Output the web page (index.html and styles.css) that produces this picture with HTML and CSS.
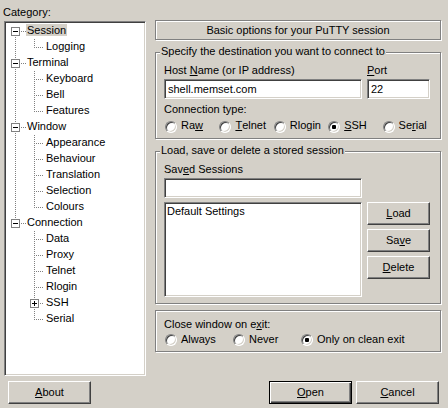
FILE: index.html
```html
<!DOCTYPE html>
<html lang="en">
<head>
<meta charset="utf-8">
<title>PuTTY Configuration</title>
<link rel="stylesheet" href="styles.css">
</head>
<body>
<div class="dialog">
  <div class="main">
    <div class="left">
      <div class="category-label">Category:</div>
      <div class="tree sunken">
        <svg class="tree-lines" width="138" height="351" viewBox="0 0 138 351">
          <g stroke="#808080" stroke-dasharray="1 1" fill="none" stroke-width="1">
            <path d="M9.5 8 V201"/>
            <path d="M15 8.5 H20 M15 40.5 H20 M15 104.5 H20 M15 200.5 H20"/>
            <path d="M28.5 16 V25 M28.5 48 V89 M28.5 112 V185 M28.5 208 V297"/>
            <path d="M30 24.5 H38 M30 56.5 H38 M30 72.5 H38 M30 88.5 H38 M30 120.5 H38 M30 136.5 H38 M30 152.5 H38 M30 168.5 H38 M30 184.5 H38 M30 216.5 H38 M30 232.5 H38 M30 248.5 H38 M30 264.5 H38 M34 280.5 H38 M30 296.5 H38"/>
          </g>
          <g stroke="#808080" fill="#fff" stroke-width="1">
            <rect x="5.5" y="4.5" width="8" height="8"/>
            <rect x="5.5" y="36.5" width="8" height="8"/>
            <rect x="5.5" y="100.5" width="8" height="8"/>
            <rect x="5.5" y="196.5" width="8" height="8"/>
            <rect x="24.5" y="276.5" width="8" height="8"/>
          </g>
          <g stroke="#000" fill="none" stroke-width="1">
            <path d="M7 8.5 H12 M7 40.5 H12 M7 104.5 H12 M7 200.5 H12"/>
            <path d="M26 280.5 H31 M28.5 278 V283"/>
          </g>
        </svg>
        <ul class="tree-list">
          <li class="l1"><span class="sel">Session</span></li>
          <li class="l2"><span>Logging</span></li>
          <li class="l1"><span>Terminal</span></li>
          <li class="l2"><span>Keyboard</span></li>
          <li class="l2"><span>Bell</span></li>
          <li class="l2"><span>Features</span></li>
          <li class="l1"><span>Window</span></li>
          <li class="l2"><span>Appearance</span></li>
          <li class="l2"><span>Behaviour</span></li>
          <li class="l2"><span>Translation</span></li>
          <li class="l2"><span>Selection</span></li>
          <li class="l2"><span>Colours</span></li>
          <li class="l1"><span>Connection</span></li>
          <li class="l2"><span>Data</span></li>
          <li class="l2"><span>Proxy</span></li>
          <li class="l2"><span>Telnet</span></li>
          <li class="l2"><span>Rlogin</span></li>
          <li class="l2"><span>SSH</span></li>
          <li class="l2"><span>Serial</span></li>
        </ul>
      </div>
    </div>

    <div class="right">
      <div class="header etched">Basic options for your PuTTY session</div>

      <div class="group etched g1">
        <span class="group-title">Specify the destination you want to connect to</span>
        <div class="host-grid">
          <div class="label">Host <u>N</u>ame (or IP address)</div>
          <div class="label"><u>P</u>ort</div>
          <div class="edit sunken">shell.memset.com</div>
          <div class="edit sunken">22</div>
        </div>
        <div class="label conn-label">Connection type:</div>
        <div class="radios five">
          <div class="opt"><span class="radio"></span>Ra<u>w</u></div>
          <div class="opt"><span class="radio"></span><u>T</u>elnet</div>
          <div class="opt"><span class="radio"></span>Rlogin</div>
          <div class="opt"><span class="radio on"></span><u>S</u>SH</div>
          <div class="opt"><span class="radio"></span>Se<u>r</u>ial</div>
        </div>
      </div>

      <div class="group etched g2">
        <span class="group-title">Load, save or delete a stored session</span>
        <div class="sess-grid">
          <div class="label">Sav<u>e</u>d Sessions</div>
          <div class="edit sunken saved-edit"></div>
          <div class="listbox sunken"><div class="list-item">Default Settings</div></div>
          <div class="side-buttons">
            <div class="btn small"><u>L</u>oad</div>
            <div class="btn small">Sa<u>v</u>e</div>
            <div class="btn small"><u>D</u>elete</div>
          </div>
        </div>
      </div>

      <div class="group etched g3">
        <div class="label">Close window on e<u>x</u>it:</div>
        <div class="radios four">
          <div class="opt"><span class="radio"></span>Always</div>
          <div class="opt"><span class="radio"></span>Never</div>
          <div class="opt wide"><span class="radio on"></span>Only on clean exit</div>
        </div>
      </div>
    </div>
  </div>

  <div class="footer">
    <div class="btn wide-btn"><u>A</u>bout</div>
    <div class="spacer"></div>
    <div class="btn wide-btn default"><u>O</u>pen</div>
    <div class="btn wide-btn"><u>C</u>ancel</div>
  </div>
</div>
</body>
</html>
```

FILE: styles.css
```css
* { box-sizing: border-box; }

html, body {
  margin: 0;
  padding: 0;
}

body {
  width: 448px;
  height: 408px;
  overflow: hidden;
  background: #d4d0c8;
  color: #000;
  font-family: "Liberation Sans", Arial, sans-serif;
  font-size: 11px;
}

u { text-decoration: underline; text-underline-offset: 1px; }

.dialog {
  display: flex;
  flex-direction: column;
  width: 448px;
  height: 408px;
}

.main {
  display: flex;
  height: 378px;
}

/* ---------- shared 3D styles ---------- */
.sunken {
  background: #fff;
  border: 1px solid;
  border-color: #808080 #fff #fff #808080;
  box-shadow: inset 1px 1px 0 #404040, inset -1px -1px 0 #d4d0c8;
}

.etched {
  border: 1px solid #808080;
  box-shadow: inset 1px 1px 0 #fff, 1px 1px 0 #fff;
}

.label {
  line-height: 13px;
  height: 13px;
  white-space: nowrap;
}

/* ---------- left: tree ---------- */
.left {
  width: 148px;
  padding-top: 6px;
  display: flex;
  flex-direction: column;
}

.category-label {
  line-height: 13px;
  height: 13px;
  margin-left: 3px;
}

.tree {
  margin: 2px 0 0 4px;
  width: 142px;
  height: 355px;
  padding: 1px;
  display: grid;
}

.tree > * { grid-area: 1 / 1; }

.tree-lines { display: block; }

.tree-list {
  list-style: none;
  margin: 0;
  padding: 0;
}

.tree-list li {
  height: 16px;
  display: flex;
  align-items: flex-start;
  white-space: nowrap;
}

.tree-list li.l1 { padding-left: 20px; }
.tree-list li.l2 { padding-left: 39px; }

.tree-list span {
  display: block;
  height: 12px;
  line-height: 12px;
  margin-top: 1px;
  padding: 0 1px;
}

.tree-list span.sel { background: #d4d0c8; }

/* ---------- right ---------- */
.right {
  width: 300px;
  padding: 20px 0 0 7px;
  display: flex;
  flex-direction: column;
}

.header {
  width: 286px;
  height: 20px;
  line-height: 18px;
  text-align: center;
}

.group {
  position: relative;
  width: 286px;
  padding: 11px 8px 0 8px;
}

.group-title {
  position: absolute;
  top: -8px;
  left: 4px;
  padding: 0 1px;
  line-height: 13px;
  background: #d4d0c8;
  white-space: nowrap;
}

.g1 { margin-top: 12px; height: 87px; }
.g2 { margin-top: 12px; height: 153px; }
.g3 { margin-top: 6px; height: 42px; padding-top: 7px; }

.host-grid {
  display: grid;
  grid-template-columns: 198px 63px;
  column-gap: 5px;
  row-gap: 2px;
}

.edit {
  height: 20px;
  line-height: 18px;
  padding: 0 3px;
  white-space: nowrap;
}

.conn-label { margin-top: 4px; }

.radios {
  display: grid;
  margin-left: 1px;
  margin-top: 3px;
}

.radios.five { grid-template-columns: repeat(5, 54.4px); }
.radios.four { grid-template-columns: repeat(4, 68px); margin-top: 2px; }

.opt {
  display: flex;
  align-items: flex-start;
  line-height: 13px;
  height: 13px;
  white-space: nowrap;
}

.opt.wide { grid-column: span 2; }

.radio {
  flex: none;
  width: 12px;
  height: 12px;
  margin: 2px 4px 0 0;
  border-radius: 50%;
  background: #fff;
  border: 1px solid;
  border-color: #808080 #fff #fff #808080;
  box-shadow: inset 1px 1px 0 #404040, inset -1px -1px 0 #d4d0c8;
  display: grid;
  place-items: center;
}

.radios.four .radio { margin-top: 1px; }

.radio.on::after {
  content: "";
  width: 4px;
  height: 4px;
  border-radius: 1px;
  background: #000;
}

.sess-grid {
  display: grid;
  grid-template-columns: 198px 63px;
  column-gap: 5px;
  align-items: start;
}

.sess-grid .label { grid-column: 1; }
.saved-edit { grid-column: 1; margin-top: 2px; }

.listbox {
  grid-column: 1;
  grid-row: 3;
  margin-top: 4px;
  height: 95px;
  padding: 2px 2px 0 2px;
}

.list-item { line-height: 13px; white-space: nowrap; }

.side-buttons {
  grid-column: 2;
  grid-row: 3;
  margin-top: 4px;
  display: flex;
  flex-direction: column;
  gap: 4px;
}

/* ---------- buttons ---------- */
.btn {
  height: 23px;
  display: flex;
  align-items: center;
  justify-content: center;
  line-height: 13px;
  background: #d4d0c8;
  border: 1px solid;
  border-color: #fff #404040 #404040 #fff;
  box-shadow: inset -1px -1px 0 #808080;
  white-space: nowrap;
}

.btn.small { width: 63px; }
.wide-btn { width: 83px; }

.btn.default {
  border-color: #000;
  box-shadow: inset 1px 1px 0 #fff, inset -1px -1px 0 #404040, inset -2px -2px 0 #808080;
}

.footer {
  display: flex;
  align-items: flex-start;
  height: 30px;
  padding: 3px 9px 0 8px;
  gap: 4px;
}

.spacer { flex: 1; }
```
